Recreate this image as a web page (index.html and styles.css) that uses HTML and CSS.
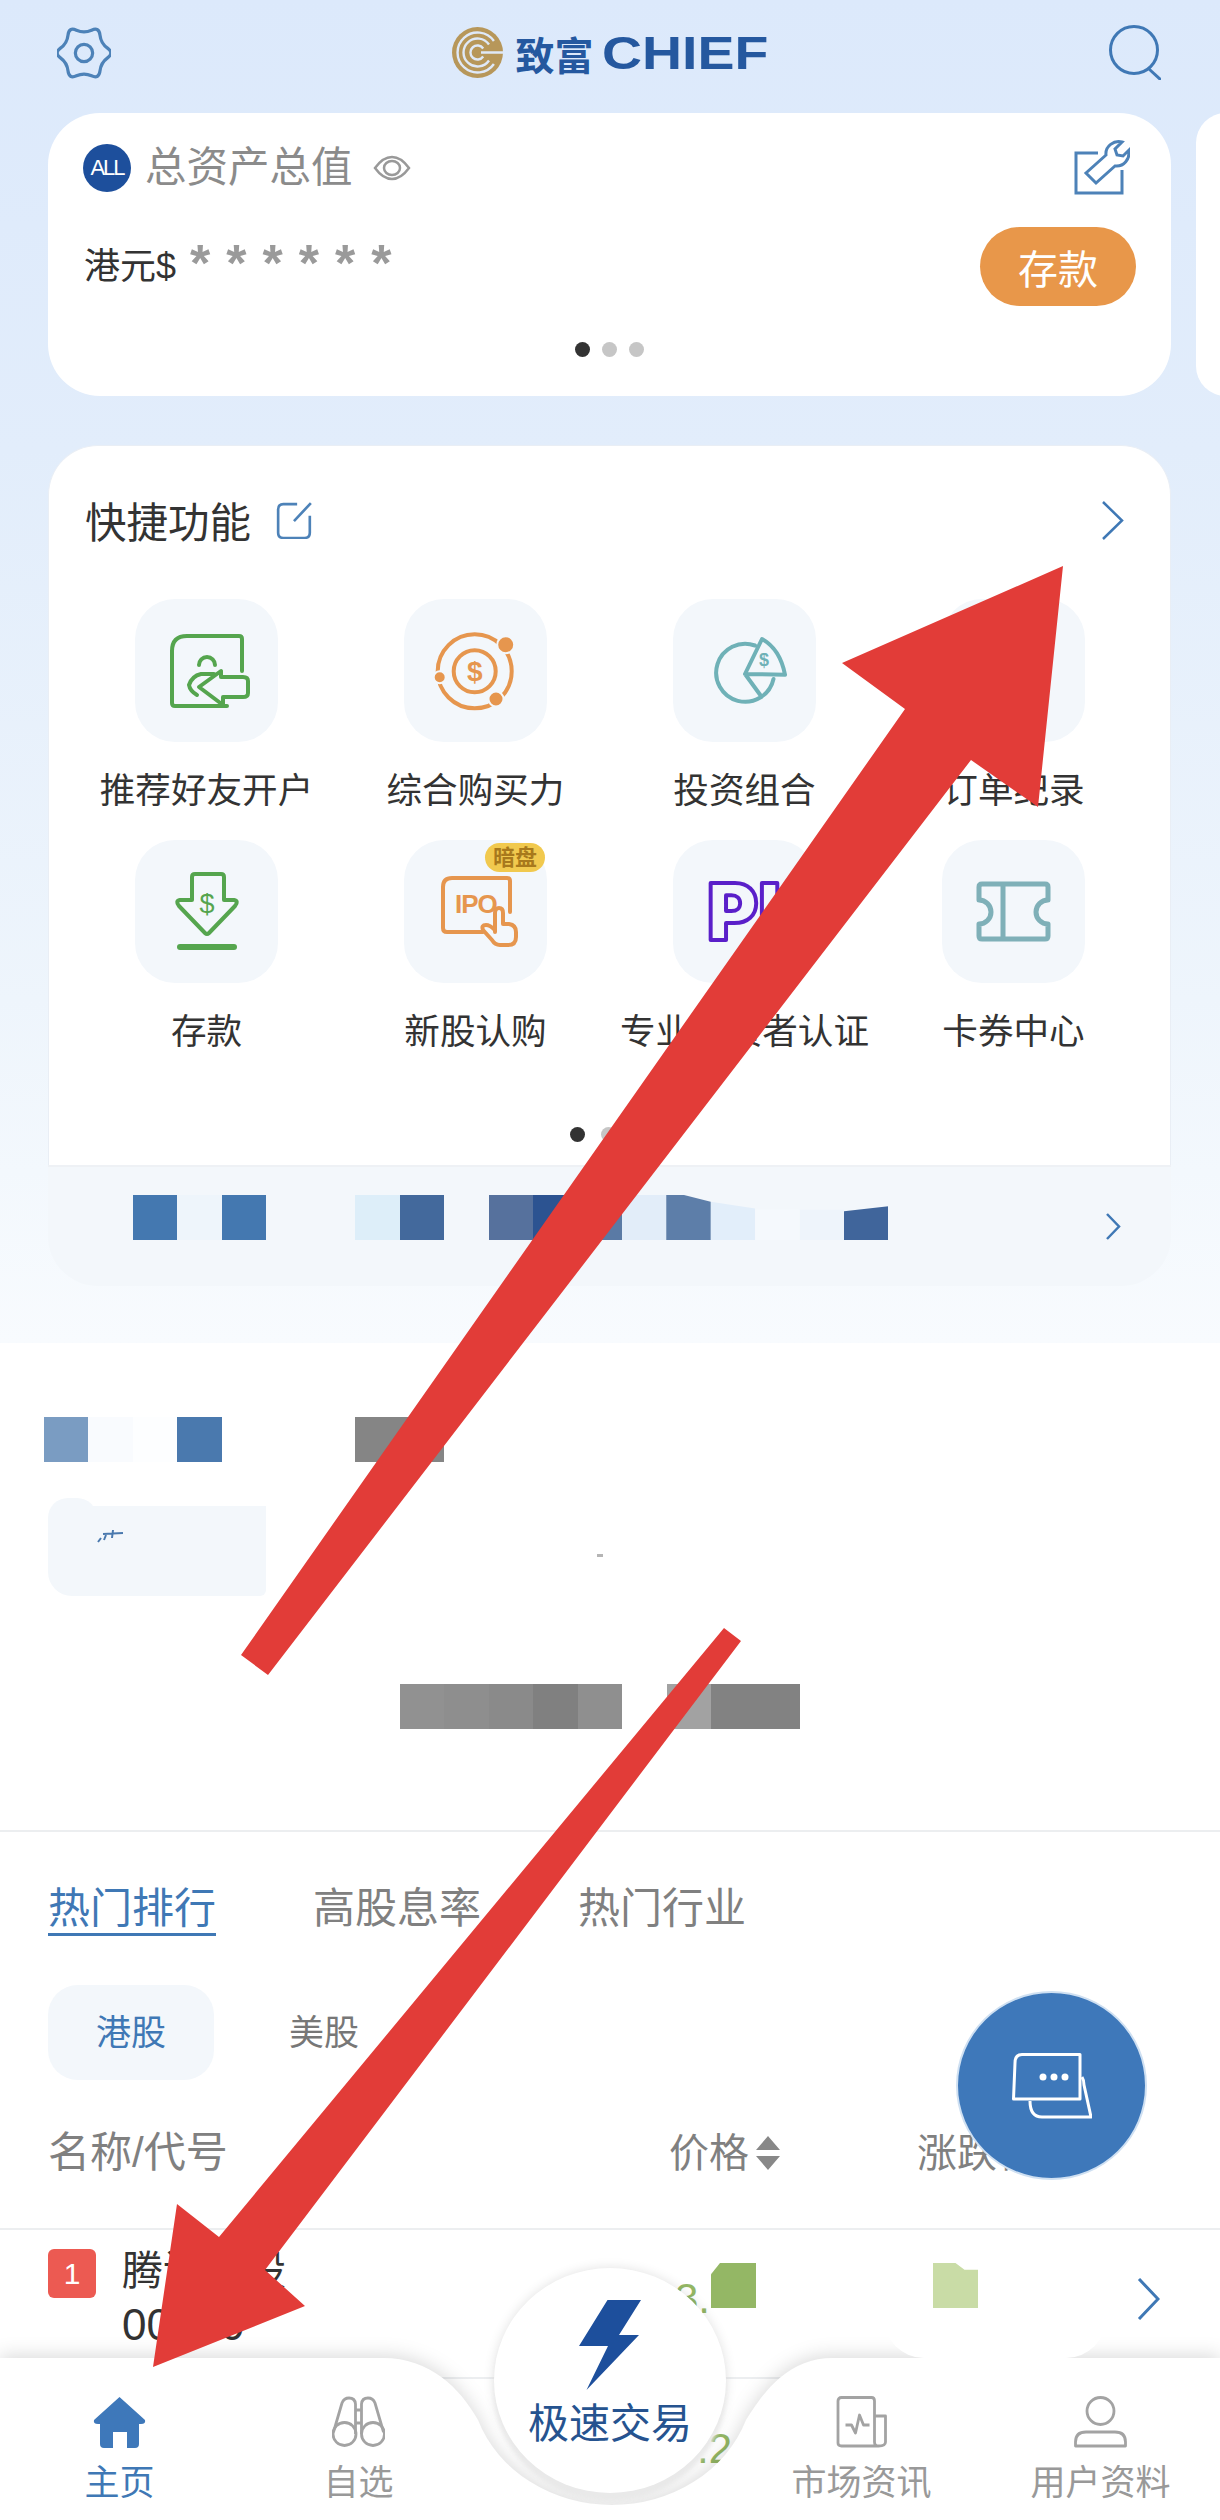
FILE: index.html
```html
<!DOCTYPE html>
<html lang="zh">
<head>
<meta charset="utf-8">
<title>致富 CHIEF</title>
<link rel="stylesheet" href="styles.css">
</head>
<body>
<div class="page">
  <div class="hero">
    <header class="topbar">
      <svg class="ico-gear" viewBox="2 2 50 48"><path d="M48.8 21.5Q42.6 17 41.8 9.4Q41 1.8 34 4.9Q27 8 20 4.9Q13 1.8 12.2 9.4Q11.4 17 5.2 21.5Q-1 26 5.2 30.5Q11.4 35 12.2 42.6Q13 50.2 20 47.1Q27 44 34 47.1Q41 50.2 41.8 42.6Q42.6 35 48.8 30.5Q55 26 48.8 21.5Z"/><circle cx="27" cy="26" r="8"/></svg>
      <div class="logo">
        <svg class="logo-mark" viewBox="0 0 51 51"><circle class="gold" cx="25.5" cy="25.5" r="25.5"/><path class="cut" d="M41.9 14A20 20 0 1 0 41.9 37M37 17.500A14 14 0 1 0 37 33.500M31.200 21.500A7 7 0 1 0 31.200 29.500M29 25.500H51"/></svg>
        <span class="logo-cn">致富</span><span class="logo-en">CHIEF</span>
      </div>
      <svg class="ico-search" viewBox="0 0 52 55"><circle cx="25" cy="25" r="23.500"/><path d="M40 44L52 55"/></svg>
    </header>

    <div class="asset-row">
      <section class="asset-card">
        <div class="asset-top">
          <div class="asset-title">
            <span class="all-badge">ALL</span>
            <span class="asset-name">总资产总值</span>
            <svg class="ico-eye" viewBox="0 0 38 26"><path d="M2 13Q10 2 19 2T36 13Q28 24 19 24T2 13Z"/><ellipse cx="19" cy="13" rx="8" ry="7"/></svg>
          </div>
          <svg class="ico-tool" viewBox="0 0 58 55"><path d="M26 13H4V53H50V30"/><path d="M24 43L14 33L34 15C33 6 42 0 50 2L43 9L45 15L51 16L57 10C58 19 52 27 43 26Z"/></svg>
        </div>
        <div class="asset-mid">
          <div class="balance"><span class="currency">港元$</span><span class="stars">******</span></div>
          <button class="deposit">存款</button>
        </div>
        <div class="dots dots-center"><i class="dot on"></i><i class="dot"></i><i class="dot"></i></div>
      </section>
      <div class="asset-next"></div>
    </div>

    <section class="quick">
      <div class="quick-body">
        <div class="quick-head">
          <div class="quick-title"><span>快捷功能</span>
            <svg class="ico-note" viewBox="0 0 35 36"><path d="M20 3H7Q2 3 2 8V30Q2 35 7 35H27Q32 35 32 30V14M17 19L33 2"/></svg>
          </div>
          <svg class="ico-chev-lg" viewBox="0 0 23 39"><path d="M2 1L21 19.500L2 38"/></svg>
        </div>
        <div class="quick-grid">
          <div class="quick-item"><div class="tile">
            <svg class="tile-svg s-green" viewBox="0 0 143 143"><path d="M107 72V40Q107 37 104 37H52Q37 37 37 52V104Q37 107 40 107H92M64 66a8 8 0 0 1 16 0M79 75H66Q57 77 54 86Q55 92 62 96"/><path d="M64 88L86 72V78H108Q113 78 113 82V94Q113 98 108 98H88V106Z"/></svg>
          </div><span class="quick-label">推荐好友开户</span></div>

          <div class="quick-item"><div class="tile">
            <svg class="tile-svg s-orange" viewBox="0 0 143 143"><circle cx="70.700" cy="72.300" r="37"/><circle cx="70.700" cy="72.300" r="21"/><text class="dollar-b" x="70.700" y="82" text-anchor="middle">$</text><circle class="orb" cx="101.700" cy="45.700" r="8.500"/><circle class="orb" cx="92" cy="100" r="7.500"/><circle class="orb" cx="35.700" cy="78.300" r="6"/></svg>
          </div><span class="quick-label">综合购买力</span></div>

          <div class="quick-item"><div class="tile">
            <svg class="tile-svg s-teal" viewBox="0 0 143 143"><path d="M82 46.500A29 29 0 1 0 100.500 80M72 75L88 97M72 75L89 40Q107 50 112 75.700Z"/><text class="dollar-s" x="91" y="67" text-anchor="middle">$</text></svg>
          </div><span class="quick-label">投资组合</span></div>

          <div class="quick-item"><div class="tile"></div><span class="quick-label">订单纪录</span></div>

          <div class="quick-item"><div class="tile">
            <svg class="tile-svg s-green" viewBox="0 0 143 143"><path d="M57 60V37Q57 34 60 34H86Q89 34 89 37V60H99Q104 61 100 66L74 93Q72 95 70 93L44 66Q40 61 45 60Z"/><path class="bar" d="M45 107H99"/><text class="dollar-m" x="72" y="73" text-anchor="middle">$</text></svg>
          </div><span class="quick-label">存款</span></div>

          <div class="quick-item"><div class="tile">
            <svg class="tile-svg s-orange" viewBox="0 0 143 143"><path d="M106 72V41Q106 38 103 38H48Q39 38 39 47V88Q39 92 43 92H79"/><text class="ipo" x="51" y="73">IPO</text><path class="hand" d="M91 92V73Q91 68 95 68T99 73V84H105Q112 85 112 92V97Q112 105 104 105H96Q91 105 88 100L79 90Q77 85 82 85Q86 85 91 90Z"/></svg>
            <span class="pill-tag">暗盘</span>
          </div><span class="quick-label">新股认购</span></div>

          <div class="quick-item"><div class="tile">
            <svg class="tile-svg" viewBox="0 0 143 143"><text class="pi" x="34" y="100">PI</text></svg>
          </div><span class="quick-label">专业投资者认证</span></div>

          <div class="quick-item"><div class="tile">
            <svg class="tile-svg s-ticket" viewBox="0 0 143 143"><path d="M40 44H103Q106 44 106 47V60A12 12 0 0 0 106 84V96Q106 99 103 99H40Q37 99 37 96V84A12 12 0 0 0 37 60V47Q37 44 40 44ZM61 44V99"/></svg>
          </div><span class="quick-label">卡券中心</span></div>
        </div>
        <div class="dots dots-quick"><i class="dot on"></i><i class="dot"></i></div>
      </div>
      <div class="quick-foot">
        <div class="mosaic">
          <i class="cell b1"></i><i class="cell b2"></i><i class="cell b1"></i><i class="cell"></i><i class="cell"></i><i class="cell b3"></i><i class="cell b4"></i><i class="cell"></i><i class="cell b5"></i><i class="cell b6"></i><i class="cell b7"></i><i class="cell b8"></i><i class="cell b9 slope1"></i><i class="cell b10 slope2"></i><i class="cell b11 slope3"></i><i class="cell b12 slope3"></i><i class="cell b13 slope4"></i>
        </div>
        <svg class="ico-chev-sm" viewBox="0 0 16 27"><path d="M2 1L14 13.500L2 26"/></svg>
      </div>
    </section>
  </div>

  <section class="promo">
    <div class="mosaic">
      <i class="cell p1"></i><i class="cell p2"></i><i class="cell p3"></i><i class="cell p4"></i><i class="cell"></i><i class="cell"></i><i class="cell"></i><i class="cell g0"></i><i class="cell g0"></i>
    </div>
    <div class="promo-row">
      <div class="promo-card">
        <svg class="fleck" viewBox="0 0 28 15"><path d="M1 13L4 9M7 11L9 6M6 5L26 4M16 1L15 9"/></svg>
      </div>
      <i class="fleck-2"></i>
    </div>
    <div class="mosaic mosaic-gray">
      <i class="cell g1"></i><i class="cell g2"></i><i class="cell g3"></i><i class="cell g4"></i><i class="cell g5"></i><i class="cell"></i><i class="cell g6"></i><i class="cell g7"></i><i class="cell g7"></i>
    </div>
  </section>

  <section class="market">
    <div class="tabs">
      <span class="tab active">热门排行</span><span class="tab">高股息率</span><span class="tab">热门行业</span>
    </div>
    <div class="segments">
      <span class="segment active">港股</span><span class="segment">美股</span>
    </div>
    <div class="table-head">
      <span class="th-name">名称/代号</span>
      <span class="th-price">价格</span>
      <svg class="ico-sort" viewBox="0 0 24 34"><path d="M12 0L24 14H0ZM12 34L0 20H24Z"/></svg>
      <span class="th-change">涨跌幅</span>
    </div>
    <div class="stock-row">
      <span class="rank">1</span>
      <div class="stock-name"><span class="stock-cn">腾讯控股</span><span class="stock-code">00700</span></div>
      <span class="stock-price">3.</span>
      <i class="cell-g dark"></i>
      <i class="cell-g light"></i>
      <svg class="ico-chev-row" viewBox="0 0 23 42"><path d="M2 1L21 21L2 41"/></svg>
    </div>
    <div class="stock-row next"><span class="stock-price-2">.2</span></div>
  </section>

  <div class="fab">
    <svg class="ico-chat" viewBox="0 0 80 66"><path d="M10 1.500H68V46H1.500L3 10Q3 1.500 10 1.500Z"/><path d="M70 24Q72 27 72 32L79 64H30Q18 64 18 48"/><circle class="fill" cx="31" cy="24" r="3.500"/><circle class="fill" cx="42" cy="24" r="3.500"/><circle class="fill" cx="53" cy="24" r="3.500"/></svg>
  </div>

  <nav class="tabbar">
    <svg class="tabbar-bg" viewBox="0 0 1220 162"><path d="M0 0H383C430 0 460 30 478 62A142 127 0 0 0 746 62C766 30 790 0 833 0H1220V162H0Z"/></svg>
    <i class="tabbar-mask"></i>
    <div class="tabbar-items">
      <a class="nav-item active">
        <svg class="nav-ico" viewBox="0 0 53 52"><path class="home" d="M26.500 1L52 24Q53 28 48 28H46V48Q46 52 42 52H34V36H20V52H11Q7 52 7 48V28H5Q0 28 1 24Z"/></svg>
        <span>主页</span>
      </a>
      <a class="nav-item">
        <svg class="nav-ico line" viewBox="0 0 53 52"><circle cx="12.500" cy="38" r="11.500"/><circle cx="41" cy="38" r="11.500"/><path d="M1.500 36L10 7Q12 2 17 2Q23 2 23.500 8V38M51.500 36L43 7Q41 2 36 2Q30 2 29.500 8V38M23.500 14H29.500M23.500 27H29.500"/></svg>
        <span>自选</span>
      </a>
      <span class="nav-gap"></span>
      <a class="nav-item">
        <svg class="nav-ico line" viewBox="0 0 50 52"><path d="M42 50H5Q1.500 50 1.500 47V5Q1.500 1.500 5 1.500H35Q38 1.500 38 5V46Q38 50 42 50Q49 50 49 46V20H38M9 29H15L19 37L23 19L27 29H33"/></svg>
        <span>市场资讯</span>
      </a>
      <a class="nav-item">
        <svg class="nav-ico line" viewBox="0 0 53 52"><circle cx="26.500" cy="15" r="13.500"/><path d="M1.500 50V46Q1.500 36 12 36H41Q51.500 36 51.500 46V50Z"/></svg>
        <span>用户资料</span>
      </a>
    </div>
  </nav>

  <div class="trade">
    <svg class="ico-bolt" viewBox="0 0 62 90"><path d="M28.500 0H62L40 35H60L7.500 90L29 46H0Z"/></svg>
    <span class="trade-label">极速交易</span>
  </div>

  <svg class="annotations" viewBox="0 0 1220 2520">
    <polygon points="1063,566 1038,807 971,760 268,1675 241,1655 905,709 842,663"/>
    <polygon points="724,1628 741,1641 265,2270 305,2306 153,2367 177,2204 219,2237"/>
  </svg>
</div>
</body>
</html>
```
FILE: styles.css
```css
* { box-sizing: border-box; }
html, body { margin: 0; padding: 0; background: #fff; }
body { font-family: "Liberation Sans", "Noto Sans CJK SC", sans-serif; color: #333; }
i { display: block; font-style: normal; }

.page { position: relative; width: 1220px; height: 2520px; overflow: hidden; background: #fff; }

/* hero */
.hero { height: 1343px; background: linear-gradient(#dce9fb 0, #e2edfb 450px, #eef5fc 1000px, #f8fbfe 1343px); }
.topbar { height: 113px; padding: 25px 59px 0 57px; display: flex; justify-content: space-between; align-items: flex-start; }
.ico-gear { width: 54px; height: 52px; margin-top: 2px; fill: none; stroke: #4d82b8; stroke-width: 3; }
.ico-search { width: 52px; height: 55px; fill: none; stroke: #3f78b5; stroke-width: 3; }
.logo { display: flex; align-items: center; height: 51px; margin-top: 2px; color: #25589f; }
.logo-mark { width: 51px; height: 51px; margin-right: 12px; }
.gold { fill: #b7975a; }
.cut { fill: none; stroke: #dfe9f8; stroke-width: 2.4; }
.logo-cn { font-size: 39px; font-weight: 700; margin-right: 8px; }
.logo-en { display: inline-block; width: 166px; font-size: 47px; font-weight: 700; line-height: 51px; transform: scaleX(1.18); transform-origin: 0 50%; }

.asset-row { display: flex; gap: 25px; padding-left: 48px; }
.asset-card { flex: 0 0 1123px; height: 283px; background: #fff; border-radius: 52px; padding: 27px 35px 0 35px; }
.asset-next { flex: 0 0 60px; height: 283px; background: #fff; border-radius: 50px; }
.asset-top { display: flex; justify-content: space-between; align-items: center; height: 55px; padding-right: 6px; }
.asset-title { display: flex; align-items: center; }
.all-badge { width: 48px; height: 48px; border-radius: 50%; background: #1d4f9c; color: #fff; font-size: 22px; line-height: 48px; text-align: center; letter-spacing: -2px; }
.asset-name { font-size: 41.5px; line-height: 55px; color: #8b8b8b; margin-left: 14px; }
.ico-eye { width: 38px; height: 26px; margin-left: 20px; fill: none; stroke: #999; stroke-width: 2.5; }
.ico-tool { width: 58px; height: 55px; fill: none; stroke: #4d82b8; stroke-width: 3; }
.asset-mid { display: flex; justify-content: space-between; margin-top: 32px; }
.balance { display: flex; align-items: flex-start; }
.currency { font-size: 36px; line-height: 50px; margin-top: 15px; margin-left: 1px; }
.stars { font-size: 52px; font-weight: 700; line-height: 50px; letter-spacing: 16px; color: #9a9a9a; margin-left: 14px; margin-top: 11px; }
.deposit { width: 156px; height: 79px; border: 0; padding: 0; border-radius: 40px; background: #e8974a; color: #fff; font: inherit; font-size: 40px; }
.dots { display: flex; gap: 12px; justify-content: center; }
.dots-center { margin-top: 36px; }
.dot { width: 15px; height: 15px; border-radius: 50%; background: #c6c6c6; }
.dot.on { background: #333; }

/* quick functions */
.quick { margin: 49px 49px 0 48px; }
.quick-body { height: 720px; background: #fff; border: 1px solid #e9eef5; border-bottom: 0; border-radius: 50px 50px 0 0; padding-top: 46px; }
.quick-head { display: flex; justify-content: space-between; align-items: center; height: 56px; padding: 0 46px 0 36px; }
.quick-title { display: flex; align-items: center; font-size: 41.5px; }
.ico-note { width: 37px; height: 38px; margin-left: 25px; fill: none; stroke: #4d82b8; stroke-width: 2.5; }
.ico-chev-lg { width: 23px; height: 39px; fill: none; stroke: #3f78b5; stroke-width: 2.5; }
.quick-grid { display: grid; grid-template-columns: repeat(4, 269px); row-gap: 24px; margin: 51px 0 0 23px; }
.quick-item { display: flex; flex-direction: column; align-items: center; }
.tile { position: relative; width: 143px; height: 143px; border-radius: 40px; background: #f3f7fb; }
.tile-svg { display: block; width: 143px; height: 143px; fill: none; stroke-width: 4; stroke-linejoin: round; stroke-linecap: round; }
.quick-label { margin-top: 24px; font-size: 35.6px; line-height: 50px; white-space: nowrap; }
.s-green { stroke: #55a54e; }
.s-orange { stroke: #e6964e; }
.s-teal { stroke: #6fb1b7; }
.s-ticket { stroke: #7fb0b8; stroke-width: 5; }
.bar { stroke-width: 6; }
.orb { fill: #e6964e; stroke: #f3f7fb; stroke-width: 2; }
.dollar-b { font-size: 28px; font-weight: 700; fill: #e6964e; stroke: none; }
.dollar-s { font-size: 18px; font-weight: 700; fill: #6fb1b7; stroke: none; }
.dollar-m { font-size: 27px; fill: #55a54e; stroke: none; }
.ipo { font-size: 26px; font-weight: 700; fill: #e6964e; stroke: none; letter-spacing: -1px; }
.hand { fill: #f3f7fb; }
.pi { font-family: Inter, "Liberation Sans", sans-serif; font-size: 78px; font-weight: 900; fill: none; stroke: #5a1fc9; stroke-width: 4; }
.pill-tag { position: absolute; left: 81px; top: 3px; width: 60px; height: 29px; border-radius: 15px; background: #f1c94e; color: #a8791c; font-size: 22px; font-weight: 700; line-height: 29px; text-align: center; }
.dots-quick { justify-content: flex-start; gap: 16px; margin: 70px 0 0 521px; }

.quick-foot { display: flex; justify-content: space-between; align-items: flex-end; height: 121px; padding: 28px 50px 46px 85px; background: #f3f7fb; border-top: 2px solid #eef1f5; border-radius: 0 0 50px 50px; }
.ico-chev-sm { width: 16px; height: 27px; fill: none; stroke: #3f78b5; stroke-width: 2.5; }

/* pixelated (mosaic) text */
.mosaic { display: flex; height: 45px; }
.cell { flex: 0 0 44.45px; height: 45px; }
.b1 { background: #4478b0; }
.b2 { background: #eef5fb; }
.b3 { background: #ddeef9; }
.b4 { background: #43699c; }
.b5 { background: #56719d; }
.b6 { background: #2c5391; }
.b7 { background: #5a7aa5; }
.b8 { background: #e2edf9; }
.b9 { background: #5d7ea9; }
.b10 { background: #e2eefa; }
.b11 { background: #f5f9fd; }
.b12 { background: #eef4fb; }
.b13 { background: #40659b; }
.slope1 { clip-path: polygon(0 0, 40% 0, 100% 15%, 100% 100%, 0 100%); }
.slope2 { clip-path: polygon(0 15%, 100% 30%, 100% 100%, 0 100%); }
.slope3 { clip-path: polygon(0 33%, 100% 33%, 100% 100%, 0 100%); }
.slope4 { clip-path: polygon(0 36%, 100% 25%, 100% 100%, 0 100%); }
.p1 { background: #7a9cc2; }
.p2 { background: #f9fbfe; }
.p3 { background: #fdfeff; }
.p4 { background: #4a79ae; }
.g0 { background: #858585; }
.g1 { background: #919191; }
.g2 { background: #8e8e8e; }
.g3 { background: #8a8a8a; }
.g4 { background: #808080; }
.g5 { background: #8f8f8f; }
.g6 { background: #a2a2a2; }
.g7 { background: #828282; }

/* promo */
.promo { height: 489px; padding: 74px 0 0 44px; border-bottom: 2px solid #eceef0; }
.promo-row { display: flex; align-items: flex-start; margin: 44px 0 0 4px; }
.promo-card { position: relative; width: 218px; height: 90px; background: #f3f7fb; border-radius: 24px 0 6px 24px; padding: 23px 0 0 49px; }
.promo-card::before { content: ""; position: absolute; left: 0; top: -8px; width: 49px; height: 30px; border-radius: 20px 20px 0 0; background: #f3f7fb; }
.fleck { display: block; position: relative; width: 28px; height: 15px; fill: none; stroke: #4a79ae; stroke-width: 2; }
.fleck-2 { width: 6px; height: 3px; margin: 48px 0 0 331px; background: #b5b5b5; }
.mosaic-gray { margin: 88px 0 0 356px; }

/* market */
.tabs { display: flex; gap: 97px; padding: 52px 0 0 48px; }
.tab { height: 52px; font-size: 42px; line-height: 50px; color: #808080; }
.tab.active { color: #3f78b5; border-bottom: 3px solid #3f78b5; }
.segments { display: flex; gap: 27px; padding: 49px 0 0 48px; }
.segment { width: 166px; height: 95px; border-radius: 30px; font-size: 35px; line-height: 95px; text-align: center; color: #777; }
.segment.active { background: #f3f7fb; color: #3f78b5; }
.table-head { display: flex; align-items: center; height: 150px; padding: 48px 0 50px 48px; border-bottom: 2px solid #eceef0; color: #808080; }
.th-name { flex: 0 0 621px; font-size: 42px; line-height: 50px; }
.th-price { font-size: 40px; line-height: 50px; }
.ico-sort { width: 24px; height: 34px; margin-left: 7px; fill: #888; }
.th-change { margin-left: 137px; font-size: 40px; line-height: 50px; }
.stock-row { display: flex; align-items: flex-start; height: 149px; padding: 19px 0 0 48px; border-bottom: 2px solid #eceef0; }
.rank { flex: 0 0 48px; height: 49px; border-radius: 6px; background: #ec5a52; color: #fff; font-size: 30px; line-height: 49px; text-align: center; }
.stock-name { flex: 0 0 553px; margin-left: 26px; margin-top: -3px; display: flex; flex-direction: column; }
.stock-cn { font-size: 41px; line-height: 50px; }
.stock-code { font-size: 44px; line-height: 58px; }
.stock-price { width: 36px; margin-top: 25px; font-size: 42px; line-height: 50px; color: #94b765; }
.cell-g { flex: 0 0 45px; height: 45px; margin-top: 14px; }
.cell-g.dark { background: #94b765; clip-path: polygon(20% 0, 100% 0, 100% 100%, 0 100%, 0 25%); }
.cell-g.light { background: #c9dca6; margin-left: 177px; clip-path: polygon(0 0, 50% 0, 70% 15%, 100% 15%, 100% 100%, 0 100%); }
.ico-chev-row { width: 23px; height: 42px; margin: 29px 0 0 159px; fill: none; stroke: #3f78b5; stroke-width: 3; }
.stock-row.next { padding: 45px 0 0 697px; border-bottom: 0; }
.stock-price-2 { width: 35px; font-size: 42px; line-height: 50px; text-align: right; color: #94b765; }

/* floating */
.fab { position: absolute; left: 956px; top: 1991px; width: 191px; height: 189px; display: flex; align-items: center; justify-content: center; border-radius: 50%; background: #3e78ba; border: 2px solid #cfe0f2; }
.ico-chat { width: 80px; height: 66px; fill: none; stroke: #fff; stroke-width: 3; stroke-linejoin: round; }
.ico-chat .fill { fill: #fff; stroke: none; }

/* bottom bar */
.tabbar { position: absolute; left: 0; right: 0; bottom: 0; height: 162px; }
.tabbar-bg { position: absolute; left: 0; top: 0; width: 1220px; height: 162px; overflow: visible; fill: #fff; filter: drop-shadow(0 -3px 9px rgba(0, 0, 0, .14)); }
.tabbar-mask { position: absolute; left: 884px; top: -40px; width: 222px; height: 40px; background: #fff; border-radius: 0 0 44px 44px; }
.tabbar-items { position: relative; display: grid; grid-template-columns: 239px 239px 264px 239px 239px; padding-top: 38px; }
.nav-item { display: flex; flex-direction: column; align-items: center; color: #999; }
.nav-item.active { color: #3f78b5; }
.nav-item span { margin-top: 15px; font-size: 35px; line-height: 40px; white-space: nowrap; }
.nav-ico { width: 53px; height: 52px; }
.home { fill: #3e78ba; }
.line { fill: none; stroke: #a3a3a3; stroke-width: 2.8; stroke-linejoin: round; }
.trade { position: absolute; left: 494px; top: 2268px; width: 232px; height: 225px; display: flex; flex-direction: column; align-items: center; padding-top: 32px; border-radius: 50%; background: #fff; box-shadow: 0 8px 4px #e9e9e9, 0 0 12px rgba(0, 0, 0, .12); }
.ico-bolt { width: 62px; height: 90px; fill: #1d4f9c; }
.trade-label { margin-top: 14px; font-size: 41px; line-height: 40px; color: #26538f; white-space: nowrap; }

.annotations { position: absolute; left: 0; top: 0; width: 1220px; height: 2520px; pointer-events: none; fill: #e23c38; }
```
